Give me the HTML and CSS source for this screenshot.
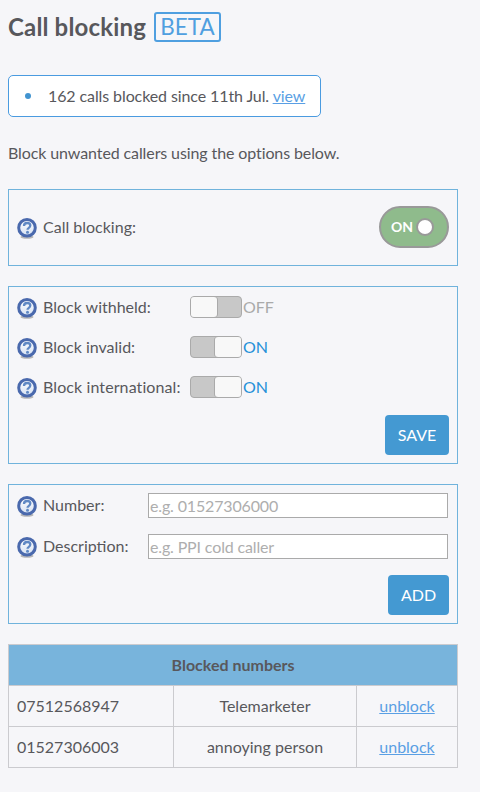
FILE: index.html
```html
<!DOCTYPE html>
<html lang="en">
<head>
<meta charset="utf-8">
<title>Call blocking</title>
<link rel="stylesheet" href="styles.css">
</head>
<body>
<svg class="defs" width="0" height="0" aria-hidden="true">
  <defs>
    <linearGradient id="qfill" x1="0" y1="0" x2="0" y2="1">
      <stop offset="0" stop-color="#ffffff"/>
      <stop offset="1" stop-color="#d5e0f2"/>
    </linearGradient>
    <symbol id="help" viewBox="0 0 20 21">
      <ellipse cx="10" cy="19" rx="6.500" ry="1.800" fill="#8a8a8a" opacity=".6"/>
      <circle cx="10" cy="9.800" r="8.300" fill="url(#qfill)" stroke="#4a69ad" stroke-width="3"/>
      <path d="M7 8c0-1.900 1.400-3 3.200-3 1.800 0 3.100 1 3.100 2.600 0 1.300-.8 1.900-1.700 2.500-.7.500-1.100.8-1.100 1.700" fill="none" stroke="#5f88c4" stroke-width="2.300"/>
      <circle cx="10.500" cy="14.300" r="1.500" fill="#5f88c4"/>
    </symbol>
  </defs>
</svg>

<header class="title-row">
  <h1 class="title">Call blocking</h1>
  <span class="beta">BETA</span>
</header>

<div class="notice">
  <span class="bullet"></span>
  <span class="notice-text">162 calls blocked since 11th Jul. <a href="#" class="link">view</a></span>
</div>

<p class="intro">Block unwanted callers using the options below.</p>

<section class="panel panel-main">
  <div class="label-wrap">
    <svg class="help"><use href="#help"/></svg>
    <span>Call blocking:</span>
  </div>
  <div class="pill"><span class="pill-text">ON</span><span class="pill-knob"></span></div>
</section>

<section class="panel panel-options">
  <div class="opt-row">
    <div class="label-wrap opt-label"><svg class="help"><use href="#help"/></svg><span>Block withheld:</span></div>
    <div class="switch switch-off"><span class="knob"></span></div>
    <span class="state-off">OFF</span>
  </div>
  <div class="opt-row">
    <div class="label-wrap opt-label"><svg class="help"><use href="#help"/></svg><span>Block invalid:</span></div>
    <div class="switch switch-on"><span class="knob"></span></div>
    <span class="state-on">ON</span>
  </div>
  <div class="opt-row">
    <div class="label-wrap opt-label"><svg class="help"><use href="#help"/></svg><span class="label-wide">Block international:</span></div>
    <div class="switch switch-on"><span class="knob"></span></div>
    <span class="state-on">ON</span>
  </div>
  <div class="actions actions-save"><button class="btn btn-save">SAVE</button></div>
</section>

<section class="panel panel-add">
  <div class="field-row">
    <div class="label-wrap field-label"><svg class="help"><use href="#help"/></svg><span class="field-text">Number:</span></div>
    <input class="input" type="text" placeholder="e.g. 01527306000">
  </div>
  <div class="field-row">
    <div class="label-wrap field-label"><svg class="help"><use href="#help"/></svg><span class="field-text">Description:</span></div>
    <input class="input" type="text" placeholder="e.g. PPI cold caller">
  </div>
  <div class="actions actions-add"><button class="btn btn-add">ADD</button></div>
</section>

<table class="blocked">
  <colgroup><col class="c1"><col class="c2"><col class="c3"></colgroup>
  <thead><tr><th colspan="3">Blocked numbers</th></tr></thead>
  <tbody>
    <tr><td>07512568947</td><td class="center">Telemarketer</td><td class="center"><a href="#" class="link">unblock</a></td></tr>
    <tr><td>01527306003</td><td class="center">annoying person</td><td class="center"><a href="#" class="link">unblock</a></td></tr>
  </tbody>
</table>
</body>
</html>
```

FILE: styles.css
```css
* { box-sizing: border-box; }
html, body { margin: 0; height: 100%; }
body {
  padding: 12px 22px 0 8px;
  background: #f6f6f9;
  color: #58585c;
  font: 16px/24px Lato, "Open Sans", sans-serif;
  overflow: hidden;
}
.defs { position: absolute; }
.title-row { display: flex; align-items: center; gap: 8px; height: 30px; }
.title { margin: 0; font-size: 24px; line-height: 30px; font-weight: 700; letter-spacing: .16px; color: #58585c; }
.beta {
  width: 67px; height: 30px;
  border: 2px solid #4f9fe0; border-radius: 3px;
  color: #4f9fe0; font-size: 22.400px; line-height: 26px; text-align: center;
}
.notice {
  display: flex; align-items: center;
  width: 313px; height: 42px; margin-top: 33px; padding-left: 16px;
  background: #fff; border: 1px solid #4a9be0; border-radius: 5px;
}
.bullet { width: 6px; height: 6px; margin-right: 17px; border-radius: 50%; background: #4294d0; }
.notice-text { letter-spacing: -.1px; }
.link { color: #5a9fe4; text-decoration: underline; }
.intro { margin: 24px 0 0; height: 24px; letter-spacing: -.105px; }
.panel { width: 450px; border: 1px solid #70b3dc; }
.panel-main {
  display: flex; justify-content: space-between; align-items: center;
  height: 77px; margin-top: 24px; padding: 0 8px 1px;
}
.label-wrap { display: flex; align-items: center; gap: 6px; }
.label-wide { letter-spacing: .1px; }
.help { display: block; width: 20px; height: 21px; flex: none; margin-top: 2px; }
.pill {
  display: flex; align-items: center; justify-content: flex-end; gap: 5px;
  width: 70px; height: 42px; padding-right: 15px;
  background: #8fbb8c; border: 2px solid #999; border-radius: 21px;
}
.pill-text { color: #fff; font-size: 14px; font-weight: 700; }
.pill-knob { width: 14px; height: 14px; background: #fff; border-radius: 50%; box-shadow: 0 0 0 2px #999; }
.panel-options { height: 178px; margin-top: 20px; padding: 9px 8px 0; }
.opt-row { display: flex; align-items: center; height: 22px; margin-bottom: 18px; }
.opt-label { width: 173px; }
.switch {
  display: flex; width: 52px; height: 22px; flex: none;
  background: #c8c8c8; border: 1px solid #aaa; border-radius: 4px;
}
.switch-on { justify-content: flex-end; }
.knob { width: 26px; height: 20px; background: #f8f8f8; border-radius: 3px; }
.switch-off .knob { box-shadow: 1px 0 0 #aaa; }
.switch-on .knob { box-shadow: -1px 0 0 #aaa; }
.state-off { margin-left: 1px; color: #aaa; }
.state-on { margin-left: 1px; color: #2590d8; }
.actions { display: flex; justify-content: flex-end; }
.actions-save { margin-top: -1px; }
.btn {
  height: 40px; padding: 0 0 2px; border: 0; border-radius: 4px;
  background: #4499d2; color: #fff;
  font: 16px Lato, sans-serif;
}
.btn-save { width: 64px; }
.btn-add { width: 61px; }
.panel-add { height: 140px; margin-top: 20px; padding: 8px 8px 0; }
.field-row { display: flex; align-items: center; height: 25px; margin-bottom: 16px; }
.field-label { width: 131px; flex: none; }
.field-text { padding-bottom: 2px; }
.input {
  width: 300px; height: 25px; padding: 0 1px; flex: none;
  background: #fff; border: 1px solid #aaa; border-radius: 0;
  font: 16px Lato, sans-serif; letter-spacing: -.15px; color: #555;
}
.input::placeholder { color: #aeaeae; opacity: 1; }
.blocked {
  width: 449px; margin-top: 20px; table-layout: fixed;
  border-collapse: collapse;
}
.c1 { width: 165px; }
.c2 { width: 183px; }
.c3 { width: 101px; }
.blocked th, .blocked td { border: 1px solid #cbcbcf; height: 41px; padding: 0 8px; }
.blocked th { background: #78b4dc; font-weight: 700; }
.center { text-align: center; }
```
